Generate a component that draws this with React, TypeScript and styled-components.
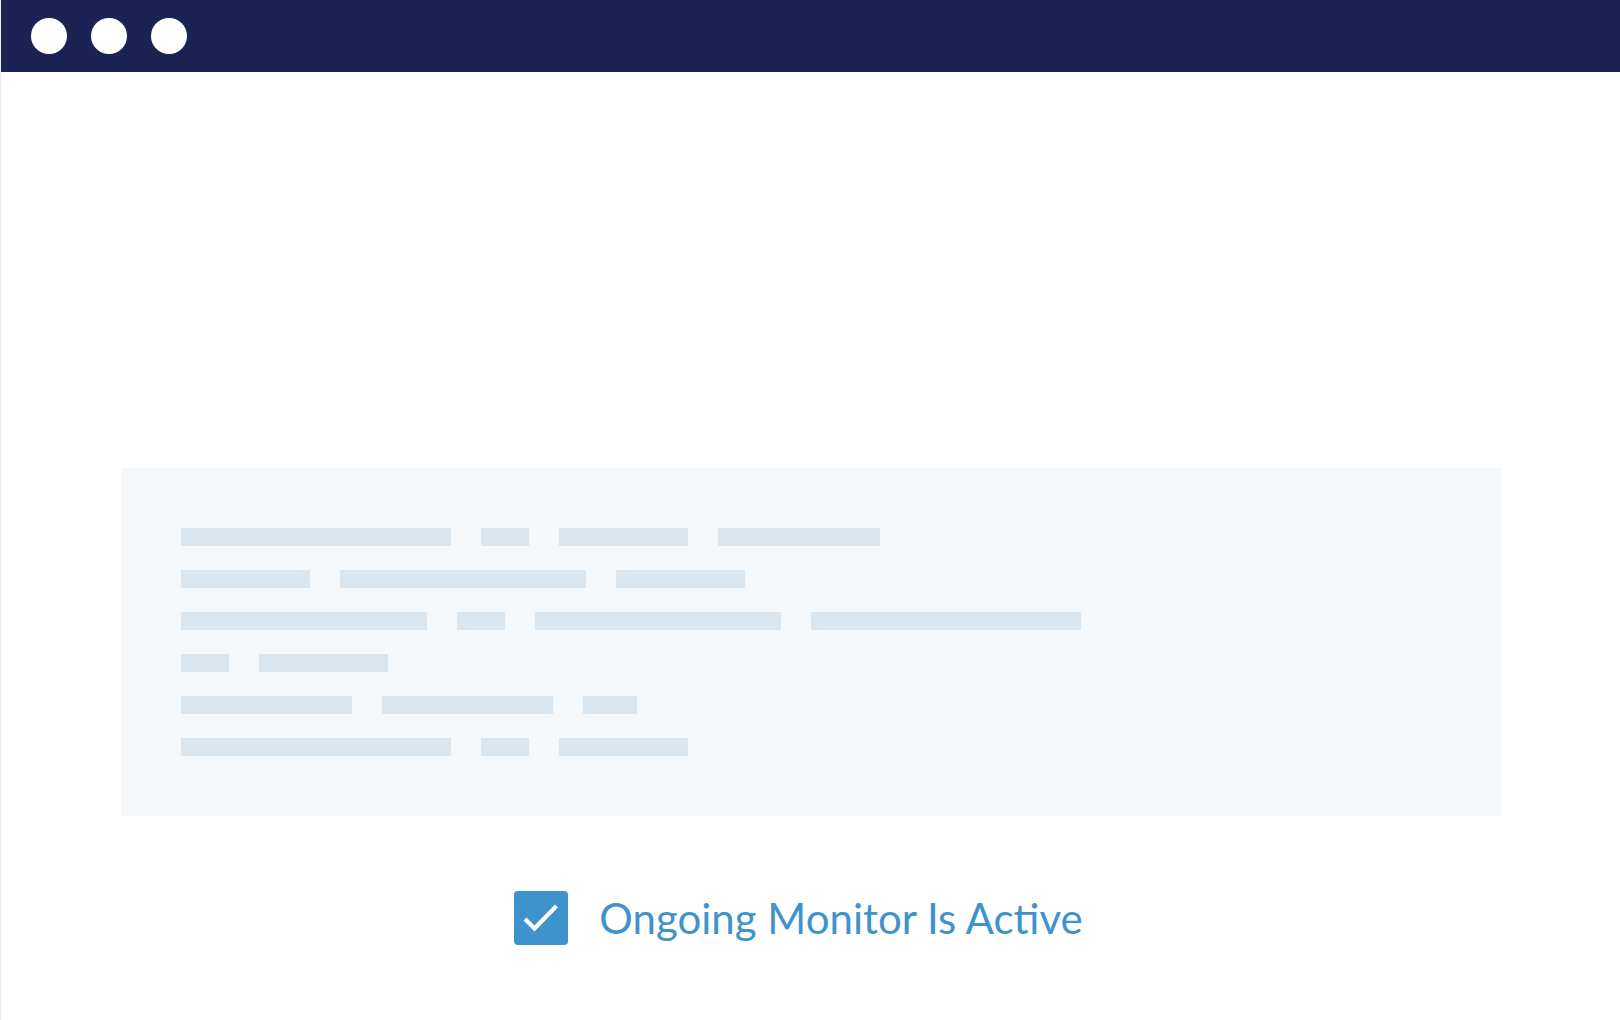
import React from "react";
import styled, { createGlobalStyle } from "styled-components";

const GlobalStyle = createGlobalStyle`
  html, body {
    margin: 0;
    padding: 0;
    background: #ffffff;
  }
  body {
    font-family: Lato, "Open Sans", "Liberation Sans", sans-serif;
  }
`;

const Frame = styled.div`
  width: 1620px;
  height: 1020px;
  box-sizing: border-box;
  border-left: 1px solid #ececec;
  background: #ffffff;
  display: flex;
  flex-direction: column;
  overflow: hidden;
`;

const TitleBar = styled.div`
  height: 72px;
  background: #1b2354;
  display: flex;
  align-items: center;
  gap: 24px;
  padding-left: 30px;
  flex-shrink: 0;
`;

const Dot = styled.span`
  width: 36px;
  height: 36px;
  border-radius: 50%;
  background: #ffffff;
  display: block;
`;

const Body = styled.main`
  display: flex;
  flex-direction: column;
  padding: 396px 119px 0 120px;
`;

const Panel = styled.section`
  background: #f4f8fb;
  height: 348px;
  box-sizing: border-box;
  padding: 60px;
  display: flex;
  flex-direction: column;
  gap: 24px;
`;

const Line = styled.div`
  display: flex;
  gap: 30px;
  height: 18px;
`;

const Bar = styled.span<{ $w: number }>`
  display: block;
  width: ${(p) => p.$w}px;
  height: 18px;
  background: #dae5ee;
`;

const StatusRow = styled.div`
  display: flex;
  align-items: center;
  justify-content: center;
  gap: 31px;
  margin-top: 75px;
  padding-right: 25px;
`;

const CheckBox = styled.span`
  width: 54px;
  height: 54px;
  border-radius: 4px;
  background: #3f93cd;
  display: flex;
  align-items: center;
  justify-content: center;
  flex-shrink: 0;
`;

const Label = styled.span`
  font-family: Lato, "Open Sans", "Liberation Sans", sans-serif;
  font-size: 42px;
  font-weight: 400;
  color: #3f93cd;
  line-height: 1;
`;

const rows: number[][] = [
  [270, 48, 129, 162],
  [129, 246, 129],
  [246, 48, 246, 270],
  [48, 129],
  [171, 171, 54],
  [270, 48, 129],
];

export default function App() {
  return (
    <>
      <GlobalStyle />
      <Frame>
        <TitleBar>
          <Dot />
          <Dot />
          <Dot />
        </TitleBar>
        <Body>
          <Panel>
            {rows.map((r, i) => (
              <Line key={i}>
                {r.map((w, j) => (
                  <Bar key={j} $w={w} />
                ))}
              </Line>
            ))}
          </Panel>
          <StatusRow>
            <CheckBox>
              <svg width="54" height="54" viewBox="0 0 54 54">
                <path
                  d="M12.5 29.5 L20.5 37.5 L41 16.5"
                  fill="none"
                  stroke="#ffffff"
                  strokeWidth="4.2"
                  strokeLinecap="square"
                  strokeLinejoin="miter"
                />
              </svg>
            </CheckBox>
            <Label>Ongoing Monitor Is Active</Label>
          </StatusRow>
        </Body>
      </Frame>
    </>
  );
}
